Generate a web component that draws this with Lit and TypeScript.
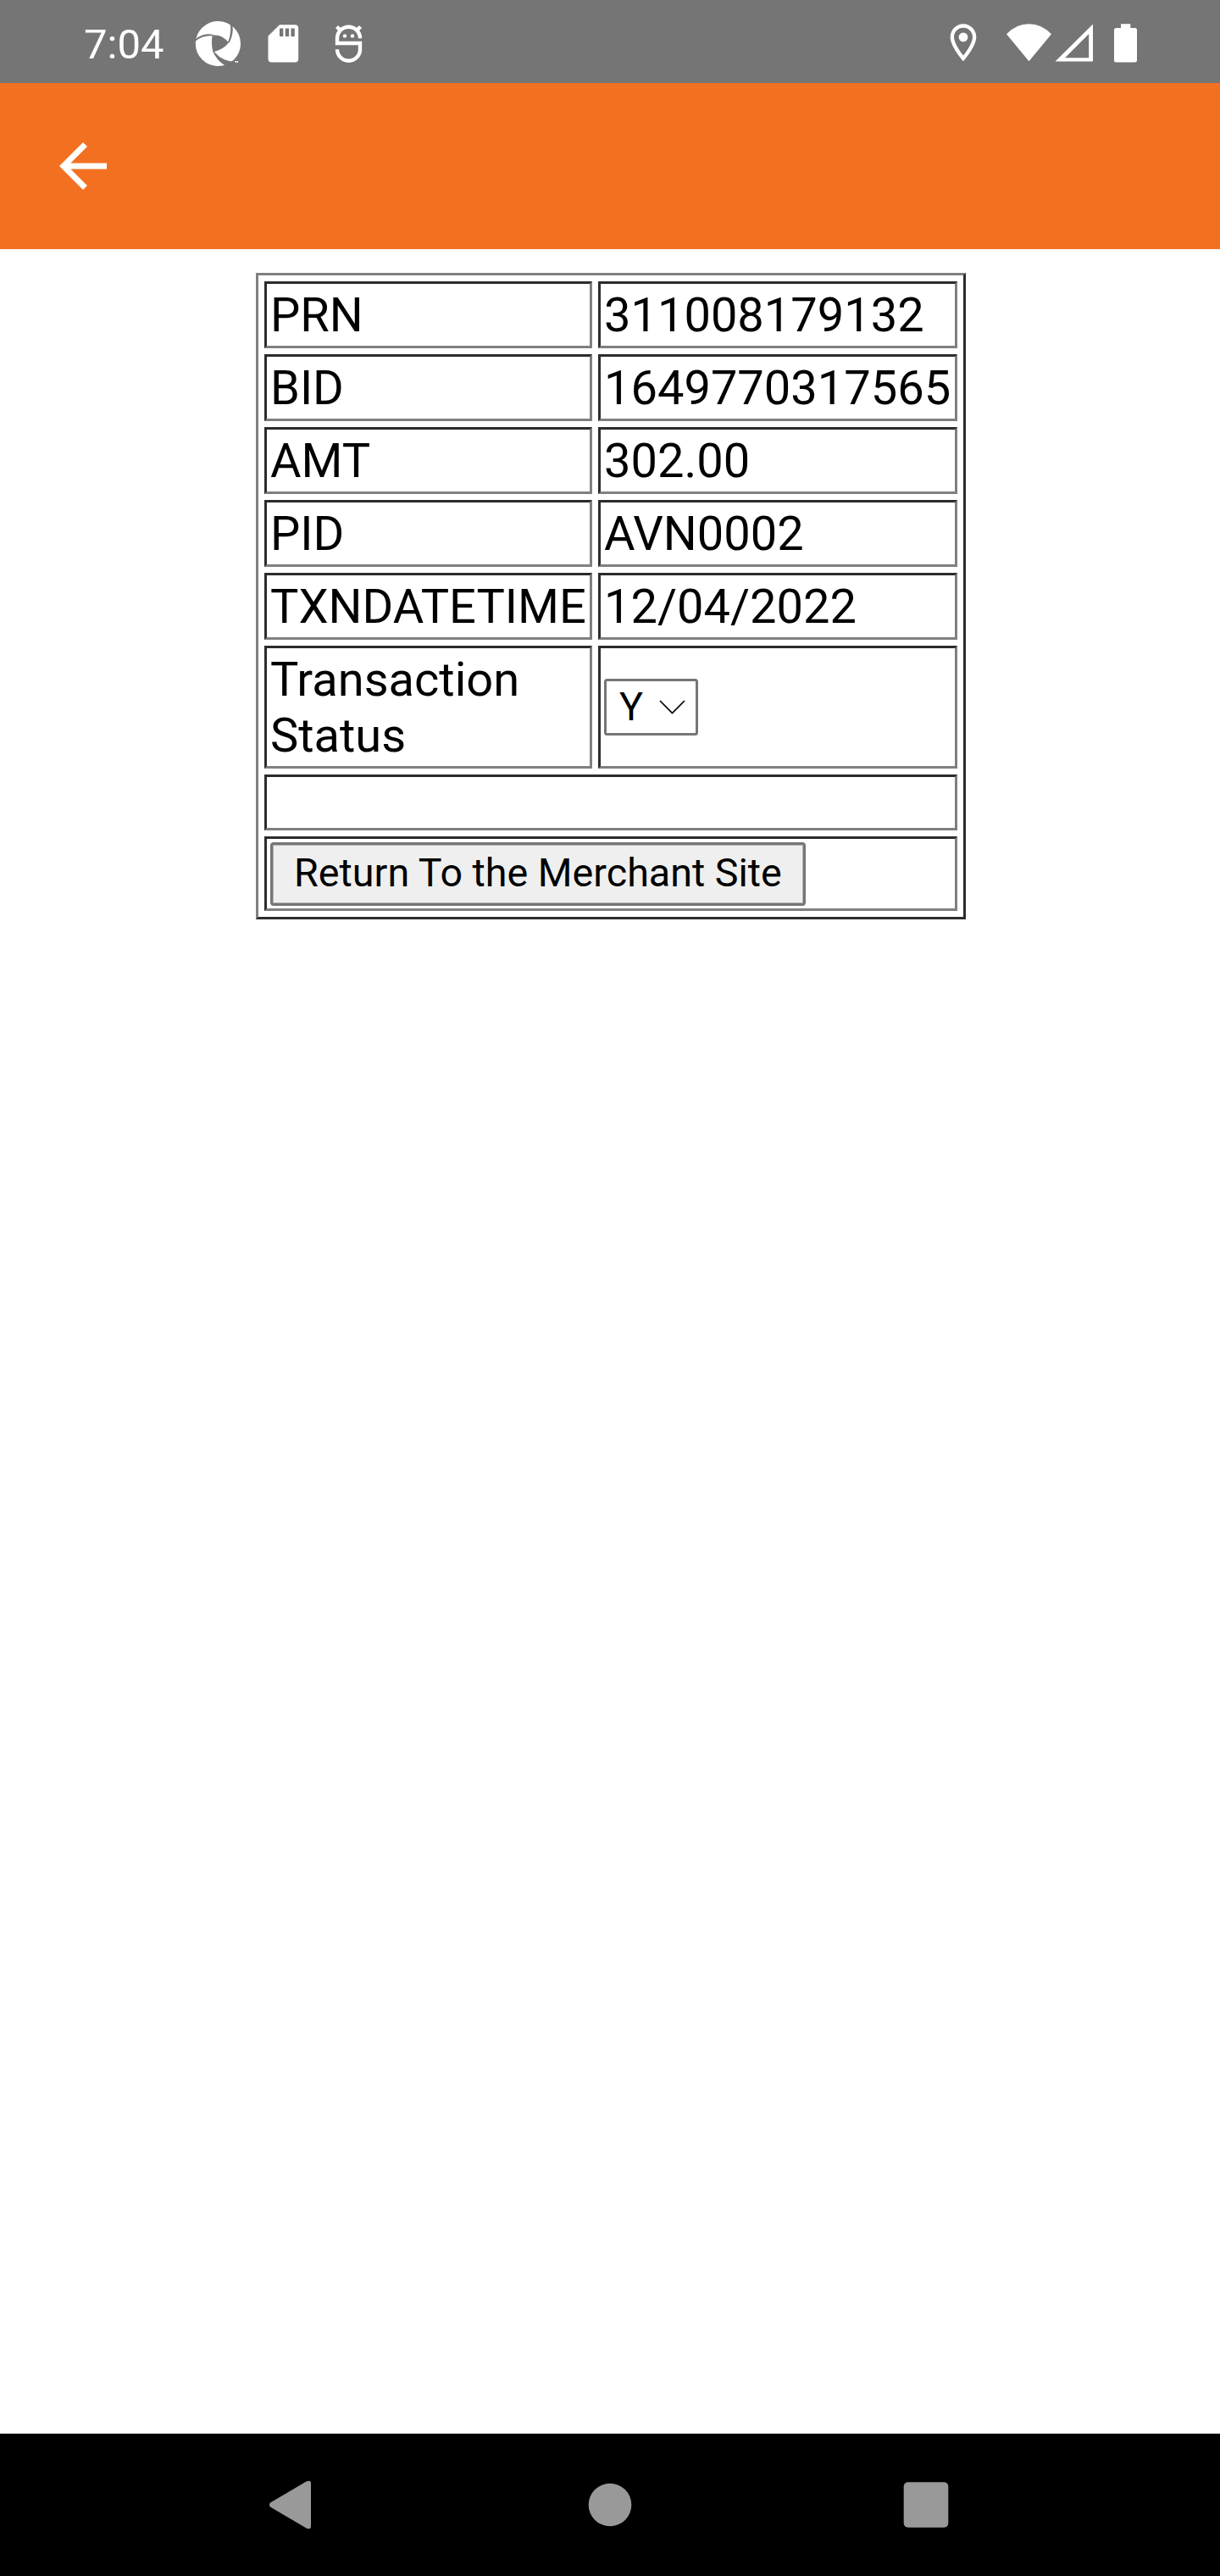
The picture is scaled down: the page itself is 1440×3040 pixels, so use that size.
import { LitElement, html, css } from "lit";
import { customElement, property } from "lit/decorators.js";

@customElement("status-bar")
class StatusBar extends LitElement {
  static styles = css`
    :host {
      display: flex;
      justify-content: space-between;
      height: 98px;
      padding: 0 90px 0 98px;
      background: #757575;
      color: #fff;
      font: 49px/58px Roboto, sans-serif;
      box-sizing: border-box;
    }
    .group {
      display: flex;
    }
    .time {
      width: 124px;
      padding: 24px 0 0 1px;
      box-sizing: border-box;
      white-space: nowrap;
    }
    svg {
      display: block;
      height: 98px;
      fill: #fff;
    }
    .line {
      fill: none;
      stroke: #fff;
      stroke-width: 4.4;
    }
    .cut {
      fill: #757575;
    }
  `;

  @property() time = "7:04";

  render() {
    return html`
      <div class="group">
        <span class="time">${this.time}</span>
        <svg width="74" viewBox="222 0 74 98">
          <circle cx="257.4" cy="51.5" r="26.6" />
          <g class="cut" transform="translate(225 18) scale(.33333)">
            <path d="M77 71Q110 66 135 97Q116 122 79 130Q72 100 77 71Z" />
            <path d="M16 86Q45 58 84 70L76 73Q45 70 16 92Z" />
            <path d="M139 22Q147 62 132 96L137 97Q153 68 148 32Z" />
            <path d="M79 129Q94 162 126 180L156 164Q112 164 84 129Z" />
          </g>
          <path d="M277 72h2v2h-1v-1h-1zm2.6 0h1.4v2h-1.4z" />
        </svg>
        <svg width="76" viewBox="296 0 76 98">
          <path
            fill-rule="evenodd"
            d="M330 29.2H348.2a4 4 0 0 1 4 4V69.5a4 4 0 0 1-4 4H320.5a4 4 0 0 1-4-4V42.5ZM330 33.5V43h4.3V33.5ZM336.8 33.5V43h4.3V33.5ZM343.5 33.5V43h4.3V33.5Z"
          />
        </svg>
        <svg width="78" viewBox="372 0 78 98">
          <path
            class="line"
            d="M425 45.2A13.5 13.5 0 0 0 398 45.2V51H425V58.2A13.5 13.5 0 0 1 398 58.2"
          />
          <path class="line" d="M397.5 31.5L402 36M425.5 31.5L421 36" />
          <circle cx="407" cy="42.4" r="2.2" />
          <circle cx="416" cy="42.4" r="2.2" />
        </svg>
      </div>
      <div class="group">
        <svg width="60" viewBox="1110 0 60 98">
          <path
            fill-rule="evenodd"
            d="M1137 28.3C1128.5 28.3 1121.7 35.2 1121.7 43.7C1121.7 55.2 1137 72.3 1137 72.3S1152.3 55.2 1152.3 43.7C1152.3 35.2 1145.5 28.3 1137 28.3ZM1126 43.7C1126 37.6 1130.9 32.7 1137 32.7S1148 37.6 1148 43.7C1148 50 1141.7 59.5 1137 65.5C1132.4 59.5 1126 50 1126 43.7Z"
          />
          <circle cx="1137" cy="43.9" r="5.4" />
        </svg>
        <svg width="74" viewBox="1170 0 74 98">
          <path d="M1214.5 72.3L1188 40.3Q1199 28.2 1214.5 28.2T1241 40.3Z" />
        </svg>
        <svg width="56" viewBox="1244 0 56 98">
          <path
            fill-rule="evenodd"
            d="M1290 28.5V72.5H1245.5ZM1285.2 40L1257 68.2H1285.2Z"
          />
        </svg>
        <svg width="50" viewBox="1300 0 50 98">
          <path
            d="M1323 28.2H1334.3V33H1339.5a2.5 2.5 0 0 1 2.5 2.5V71a2.5 2.5 0 0 1-2.5 2.5H1317.5a2.5 2.5 0 0 1-2.5-2.5V35.5a2.5 2.5 0 0 1 2.5-2.5H1323Z"
          />
        </svg>
      </div>
    `;
  }
}

@customElement("app-header")
class AppHeader extends LitElement {
  static styles = css`
    :host {
      display: flex;
      align-items: center;
      height: 196px;
      padding: 0 56px;
      background: #f37021;
      box-sizing: border-box;
    }
    svg {
      display: block;
      fill: #fff;
    }
  `;

  render() {
    return html`
      <svg width="84" height="84" viewBox="0 0 24 24">
        <path d="M20 11H7.83l5.59-5.59L12 4l-8 8 8 8 1.41-1.41L7.83 13H20v-2z" />
      </svg>
    `;
  }
}

@customElement("payment-table")
class PaymentTable extends LitElement {
  static styles = css`
    :host {
      display: grid;
      grid-template-columns: 387px 424px;
      grid-template-rows: repeat(5, 79px) 145px 66px 88px;
      gap: 7px;
      width: 838px;
      padding: 7px;
      border: 3px solid;
      border-color: #808080 #2c2c2c #2c2c2c #808080;
      box-sizing: border-box;
      color: #000;
      font: 56px/66px Roboto, sans-serif;
    }
    .cell {
      display: flex;
      align-items: center;
      padding: 0 0 0 4px;
      border: 3px solid;
      border-color: #2c2c2c #808080 #808080 #2c2c2c;
      box-sizing: border-box;
    }
    .wide {
      grid-column: span 2;
    }
    .select {
      display: flex;
      align-items: center;
      justify-content: space-between;
      width: 111px;
      height: 67px;
      padding: 0 12px 0 15px;
      border: 3.5px solid #767676;
      border-radius: 3.5px;
      background: #fff;
      box-sizing: border-box;
      font-size: 46.667px;
      line-height: 54px;
    }
    .letter {
      padding-bottom: 2px;
    }
    .chevron {
      display: block;
      fill: none;
      stroke: #000;
      stroke-width: 1.7;
    }
    .button {
      width: 632px;
      height: 75px;
      padding: 0 0 3px;
      border: 3px solid #767676;
      border-radius: 4px;
      box-shadow: inset 0 0 0 1px #b2b2b2;
      background: #efefef;
      color: #000;
      box-sizing: border-box;
      font: 46.667px/54px Roboto, sans-serif;
      white-space: nowrap;
    }
  `;

  private rows: [string, string][] = [
    ["PRN", "311008179132"],
    ["BID", "1649770317565"],
    ["AMT", "302.00"],
    ["PID", "AVN0002"],
    ["TXNDATETIME", "12/04/2022"],
  ];

  render() {
    return html`
      ${this.rows.map(
        ([name, value]) => html`
          <div class="cell">${name}</div>
          <div class="cell">${value}</div>
        `
      )}
      <div class="cell">Transaction Status</div>
      <div class="cell">
        <div class="select">
          <span class="letter">Y</span>
          <svg class="chevron" width="31" height="17" viewBox="0 0 31 17">
            <path d="M1 1L15.5 15.5L30 1" />
          </svg>
        </div>
      </div>
      <div class="cell wide"></div>
      <div class="cell wide">
        <button class="button">Return To the Merchant Site</button>
      </div>
    `;
  }
}

@customElement("nav-bar")
class NavBar extends LitElement {
  static styles = css`
    :host {
      display: flex;
      justify-content: space-between;
      height: 168px;
      padding: 0 294px;
      background: #000;
      box-sizing: border-box;
    }
    svg {
      display: block;
      fill: #999;
    }
  `;

  render() {
    return html`
      <svg width="100" height="168" viewBox="294 2872 100 168">
        <path
          d="M319 2953.5L361.5 2928.6Q367 2926 367 2931V2981Q367 2986 361.5 2983.4L319 2958.5Q317 2956 319 2953.5Z"
        />
      </svg>
      <svg width="100" height="168" viewBox="670 2872 100 168">
        <circle cx="720" cy="2956" r="25.3" />
      </svg>
      <svg width="100" height="168" viewBox="1046 2872 100 168">
        <rect x="1066.7" y="2929.3" width="52.6" height="53.4" rx="5" />
      </svg>
    `;
  }
}

@customElement("app-root")
class AppRoot extends LitElement {
  static styles = css`
    :host {
      display: flex;
      flex-direction: column;
      width: 1440px;
      height: 3040px;
      background: #fff;
      overflow: hidden;
    }
    .page {
      display: flex;
      flex: 1;
      align-items: flex-start;
      padding: 28px 0 0 302px;
    }
  `;

  render() {
    return html`
      <status-bar></status-bar>
      <app-header></app-header>
      <main class="page"><payment-table></payment-table></main>
      <nav-bar></nav-bar>
    `;
  }
}
